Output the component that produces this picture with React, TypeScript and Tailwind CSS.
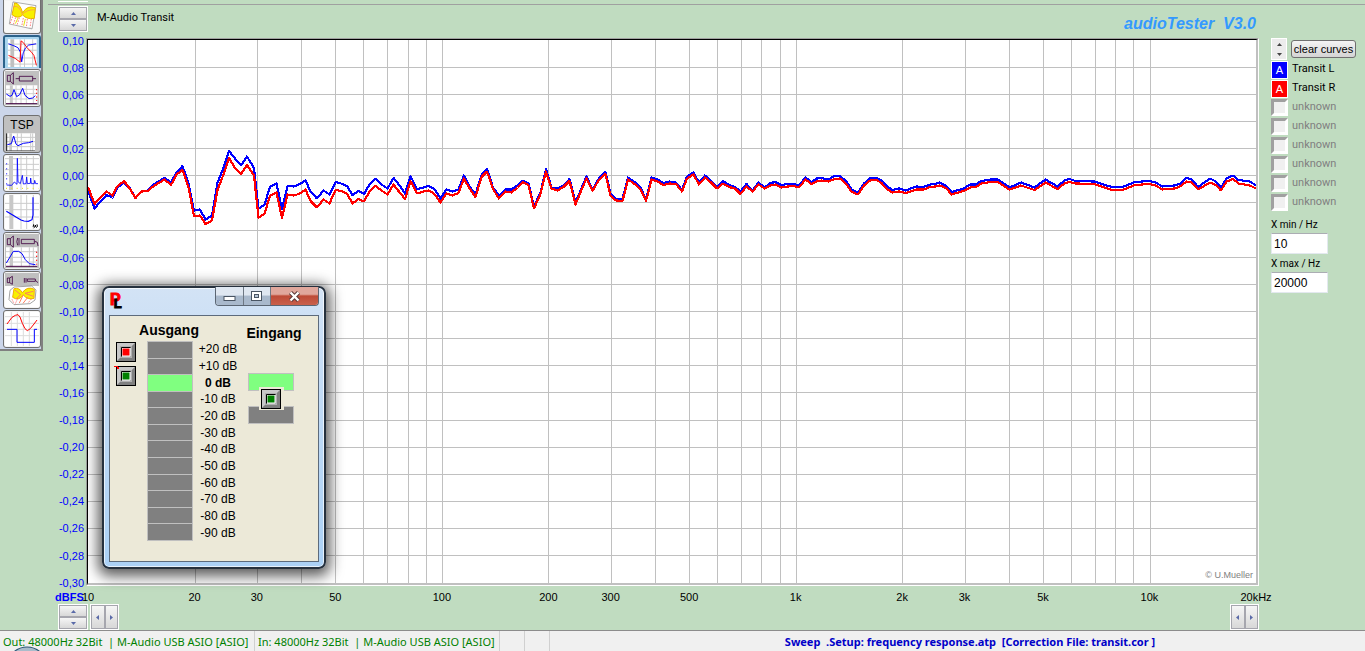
import React from "react";

const PLOT = { x: 88, y: 40, w: 1168, h: 543 };

// Plot points: horizontal position, left channel, right channel
const SAMPLES: number[][] = [
  [88, 190.5, 187], [94.5, 208.5, 204], [100, 202, 198], [106.5, 195, 191.5], [112.5, 197.5, 195.5],
  [117.5, 187.5, 186], [124, 182.5, 181], [130, 188.5, 189], [135.5, 198, 198], [141.5, 191.5, 191.5],
  [147.5, 190.5, 191], [154.5, 184, 185.5], [164.5, 178, 179.5], [171, 182.5, 185], [176.5, 172.5, 174.5],
  [182.5, 166, 170], [188.5, 183.5, 187], [194, 210.5, 216], [200, 209.5, 215.5], [205.5, 219.5, 224],
  [212, 215.5, 220.5], [217.5, 182.5, 190], [223.5, 168, 174.5], [229, 151, 158], [235, 158.5, 168],
  [241, 165.5, 174], [247, 156.5, 165], [254, 168, 175.5], [258.5, 208.5, 217.5], [264.5, 205, 214],
  [270, 186.5, 195.5], [276.5, 183.5, 192.5], [282, 209, 218], [287.5, 186, 194.5], [294, 186.5, 195.5],
  [300, 184, 193.5], [305.5, 180.5, 189.5], [310.5, 191.5, 201], [317, 198.5, 207.5], [323.5, 190.5, 199.5],
  [329.5, 194.5, 203.5], [335.5, 182, 190], [341, 183.5, 191], [347, 186, 193.5], [352.5, 195, 203.5],
  [358.5, 191, 199], [364, 194, 201.5], [369.5, 184.5, 191.5], [375.5, 179, 186], [381.5, 184.5, 190.5],
  [387.5, 188.5, 194.5], [393.5, 178, 184.5], [398.5, 184, 191], [405, 193.5, 199], [410.5, 176, 181],
  [417, 189, 193.5], [423.5, 187.5, 191.5], [428.5, 186, 190.5], [434, 188.5, 193.5], [440.5, 198.5, 202.5],
  [446.5, 189.5, 193.5], [452.5, 191.5, 195.5], [458.5, 189.5, 193], [464, 175.5, 178.5], [469.5, 186.5, 188.5],
  [475.5, 194.5, 197], [481.5, 175, 177], [487, 169, 171.5], [493, 187.5, 189], [499, 195.5, 198.5],
  [505.5, 189.5, 191.5], [511.5, 189.5, 192.5], [517.5, 185.5, 187.5], [523, 180.5, 182], [528.5, 183.5, 185],
  [534, 206.5, 208.5], [540.5, 192.5, 194], [546, 169, 171.5], [551.5, 187.5, 188.5], [557.5, 188.5, 190.5],
  [563.5, 185.5, 187], [569.5, 179, 181], [575.5, 202.5, 204.5], [581, 189.5, 191], [586.5, 176.5, 178.5],
  [592.5, 189.5, 191], [598.5, 179, 180.5], [605.5, 172, 174], [610.5, 193.5, 195.5], [616, 199, 200.5],
  [622.5, 199, 201], [628, 177.5, 179.5], [634, 181.5, 183.5], [640.5, 187.5, 189], [646, 199.5, 201],
  [651.5, 177.5, 179.5], [657.5, 179.5, 181.5], [663.5, 183, 185], [669.5, 181.5, 183.5], [676, 182.5, 184],
  [682, 190, 191.5], [687, 176.5, 178.5], [693.5, 172.5, 174.5], [699, 182.5, 184.5], [705, 175.5, 177.5],
  [711, 181, 182.5], [717, 186.5, 188.5], [723, 181, 183.5], [729, 185, 187], [735, 187, 188.5],
  [740.5, 191.5, 194], [746.5, 184, 186.5], [752.5, 190.5, 191.5], [758.5, 182.5, 184.5], [764.5, 187.5, 188.5],
  [770.5, 183, 185.5], [775.5, 182, 184.5], [781.5, 185, 187.5], [787.5, 184, 186.5], [793.5, 184, 186],
  [799, 185.5, 187.5], [805.5, 177.5, 179.5], [811.5, 182, 184], [816.5, 178.5, 181.5], [821.5, 178, 180.5],
  [828.5, 179.5, 181.5], [834.5, 176, 179], [840, 176, 178.5], [846.5, 181.5, 184.5], [851.5, 189.5, 191.5],
  [858, 192.5, 194.5], [864, 183.5, 185.5], [870, 178, 180.5], [876.5, 178, 180], [881.5, 180.5, 183],
  [887, 186.5, 189], [892.5, 190, 192.5], [899, 188.5, 191.5], [905.5, 190.5, 193], [916.5, 186.5, 189.5],
  [923.5, 187, 189.5], [930, 184.5, 187], [935, 184, 186.5], [939.5, 182.5, 185.5], [946, 185.5, 188],
  [951.5, 192, 194.5], [963.5, 188.5, 191], [970, 184.5, 187.5], [975.5, 184.5, 187], [981.5, 181, 183.5],
  [991, 179.5, 182], [998, 179.5, 182], [1009.5, 187.5, 189.5], [1021, 182.5, 185.5], [1034.5, 187.5, 190],
  [1045.5, 179.5, 182.5], [1057.5, 186.5, 189], [1064.5, 180.5, 183.5], [1069.5, 179, 182], [1075.5, 181, 183.5],
  [1094.5, 181.5, 184], [1104.5, 185, 187.5], [1112.5, 187, 190], [1122.5, 187, 190], [1133.5, 182.5, 185.5],
  [1141.5, 181.5, 184.5], [1149.5, 181, 184], [1156, 182.5, 185.5], [1162, 186.5, 189.5], [1175, 185.5, 188.5],
  [1180.5, 183.5, 186], [1186.5, 178, 181.5], [1192, 179.5, 182.5], [1198, 187, 189.5], [1210, 178.5, 182.5],
  [1216, 181.5, 185], [1221, 187.5, 190.5], [1226.5, 178.5, 181.5], [1233, 175.5, 179], [1238.5, 180, 183.5],
  [1250, 181.5, 185.5], [1256, 185.5, 188.5],
];

const trace = (channel: 1 | 2) => SAMPLES.map((s) => `${s[0]},${s[channel]}`).join(" ");

const freqFraction = (hz: number) => Math.log10(hz / 10) / Math.log10(2000);

const GRID_FREQS = [10, 100, 1000, 10000]
  .flatMap((d) => [1, 2, 3, 4, 5, 6, 7, 8, 9].map((m) => m * d))
  .filter((f) => f > 10 && f < 20000);

const X_LABELS: [number, string][] = [
  [10, "10"], [20, "20"], [30, "30"], [50, "50"], [100, "100"], [200, "200"], [300, "300"], [500, "500"],
  [1000, "1k"], [2000, "2k"], [3000, "3k"], [5000, "5k"], [10000, "10k"], [20000, "20kHz"],
];

const Y_LABELS = Array.from({ length: 21 }, (_, i) => ((10 - i * 2) / 100).toFixed(2).replace(".", ","));

function Plot() {
  return (
    <svg
      viewBox={`${PLOT.x} ${PLOT.y} ${PLOT.w} ${PLOT.h}`}
      preserveAspectRatio="none"
      className="h-full w-full bg-white"
      shapeRendering="crispEdges"
      role="img"
      aria-label="Frequency response"
    >
      <g stroke="#c0c0c0" strokeWidth="1">
        {Array.from({ length: 19 }, (_, i) => {
          const y = Math.floor(PLOT.y + ((i + 1) * PLOT.h) / 20) + 0.5;
          return <line key={i} x1={PLOT.x} x2={PLOT.x + PLOT.w} y1={y} y2={y} />;
        })}
        {GRID_FREQS.map((f) => {
          const x = Math.floor(PLOT.x + 0.6 + freqFraction(f) * PLOT.w) + 0.5;
          return <line key={f} x1={x} x2={x} y1={PLOT.y} y2={PLOT.y + PLOT.h} />;
        })}
      </g>
      <polyline points={trace(1)} fill="none" stroke="#0000ff" strokeWidth="2.2" strokeLinejoin="round" />
      <polyline points={trace(2)} fill="none" stroke="#ff0000" strokeWidth="2.2" strokeLinejoin="round" />
    </svg>
  );
}

function Arrow({ dir, color = "#5a6aa8" }: { dir: "up" | "down" | "left" | "right"; color?: string }) {
  const points = { up: "0,4 7,4 3.5,0", down: "0,0 7,0 3.5,4", left: "4,0 4,7 0,3.5", right: "0,0 0,7 4,3.5" }[dir];
  const vertical = dir === "up" || dir === "down";
  return (
    <svg width={vertical ? 5 : 3} height={vertical ? 3 : 5} viewBox={vertical ? "0 0 7 4" : "0 0 4 7"} preserveAspectRatio="none">
      <polygon points={points} fill={color} />
    </svg>
  );
}

const spinButton =
  "flex flex-1 items-center justify-center border border-[#a6a6ae] bg-linear-to-b from-[#f6f6f6] to-[#d8d8d8]";

function VerticalSpinner({ label }: { label: string }) {
  return (
    <div className="flex h-[26px] w-[30px] flex-col border border-white bg-white">
      <button className={spinButton} aria-label={`${label} up`}><Arrow dir="up" /></button>
      <button className={spinButton} aria-label={`${label} down`}><Arrow dir="down" /></button>
    </div>
  );
}

function HorizontalSpinner({ label }: { label: string }) {
  return (
    <div className="flex h-[26px] w-[29px] border border-white bg-white">
      <button className={spinButton} aria-label={`${label} left`}><Arrow dir="left" /></button>
      <button className={spinButton} aria-label={`${label} right`}><Arrow dir="right" /></button>
    </div>
  );
}

const toolFrame = "h-[38px] rounded-[3px] border border-[#707070] bg-[#f4f4f4]";

function ToolButton({ label, top, rows = 102, frame = toolFrame, children }: {
  label: string; top: number; rows?: number; frame?: string; children: React.ReactNode;
}) {
  return (
    <button aria-label={label} className={`w-[38px] shrink-0 overflow-hidden p-px ${frame}`}>
      <svg viewBox={`15 ${top} 102 ${rows}`} preserveAspectRatio="none" className="h-full w-full" fill="none" strokeWidth="3">
        {children}
      </svg>
    </button>
  );
}

function Speaker({ y }: { y: number }) {
  return <path d={`M22 ${y - 9}H31V${y + 9}H22ZM31 ${y - 9}L40 ${y - 17}V${y + 17}L31 ${y + 9}`} stroke="#400040" strokeWidth="2.5" />;
}

function Toolbar() {
  return (
    <nav aria-label="Measurements" className="flex w-[43px] shrink-0 flex-col items-start gap-px self-start border-r-2 border-b-2 border-[#808080] bg-[#ccd6ea] pb-px pl-[3px]">
      <ToolButton label="Waterfall" top={0} rows={100} frame="h-[34px] rounded-b-[3px] border border-t-0 border-[#707070] bg-[#f4f4f4]">
        <path d="M15 0H117V100H15Z" fill="#f8f8f8" />
        <path d="M39 3L108 15L96 90L28 74Z" fill="#fff" stroke="#808080" strokeWidth="2" />
        <path d="M44 6Q60 8 68 38Q82 12 106 22L103 56Q80 60 68 45Q54 60 36 44Z" fill="#f8f000" stroke="#e8b000" />
        <path d="M41 18Q58 12 67 44Q78 28 104 28" stroke="#ff8060" strokeWidth="2" />
        <path d="M38 50L30 74M47 53L40 76M58 54L51 78M70 55L65 82M82 58L79 85M94 58L90 86" stroke="#ff7878" strokeDasharray="5 4" />
        <path d="M54 55L46 73M76 58L71 80" stroke="#e8e000" />
      </ToolButton>
      <ToolButton label="Frequency response" top={114} rows={90} frame="h-[33px] rounded-t-[3px] border-2 border-b-0 border-[#2c628b] bg-[#a8d4ee]">
        <path d="M21 118H113V204H21Z" fill="#fff" />
        <path d="M21 133H113M21 152H113M21 176H113M21 195H113M60 118V204M74 118V204M100 118V204" stroke="#c8c8c8" />
        <path d="M35 118V204" stroke="#c0c0c0" strokeWidth="12" />
        <path d="M23 132L40 138L53 144L61 158L65 188L70 160L77 145L87 136L111 132" stroke="#0000ff" />
        <path d="M23 168L44 177L60 189L63 123L70 128L82 144L96 158L104 168L112 199" stroke="#ff0000" />
      </ToolButton>
      <ToolButton label="Impedance" top={213}>
        <path d="M15 213H117V315H15Z" fill="#c0c0c0" />
        <path d="M18 256H112V312H18Z" fill="#fff" />
        <path d="M18 268H112M18 281H112M18 297H112M48 256V312M63 256V312M79 256V312M100 256V312" stroke="#d0d0d0" />
        <path d="M34 256V312" stroke="#c8c8c8" strokeWidth="9" />
        <Speaker y={235} />
        <path d="M47 236H58M98 236H108M58 229H98V243H58Z" stroke="#400040" strokeWidth="2.5" />
        <path d="M19 282L30 289L36 286L42 269L50 290L59 284L68 265L75 286L87 296L98 294L106 287" stroke="#0000ff" />
        <path d="M110 267V303" stroke="#ff0000" strokeDasharray="4 7" />
        <path d="M18 311H112" stroke="#400040" />
      </ToolButton>
      <div className="h-1.5" />
      <button aria-label="TSP" className="flex h-[38px] w-[38px] shrink-0 flex-col overflow-hidden rounded-[3px] border border-[#707070] bg-[#c0c0c0] p-px">
        <span className="w-full text-center font-['Liberation_Sans',sans-serif] text-[12px] leading-4 text-black">TSP</span>
        <svg viewBox="15 392 102 54" preserveAspectRatio="none" className="min-h-0 w-full flex-1" fill="none" strokeWidth="3">
          <path d="M19 393H105V447H19Z" fill="#fff" />
          <path d="M19 405H105M19 418H105M19 433H105M52 393V447M64 393V447M92 393V447M98 393V447" stroke="#ccc" />
          <path d="M32 393V447" stroke="#c8c8c8" strokeWidth="8" />
          <path d="M20 393V447" stroke="#111" />
          <path d="M22 427L34 424L41 401L48 425L54 430L70 423L86 421L99 417" stroke="#0000ff" />
          <path d="M19 445H105" stroke="#333" strokeWidth="2" />
        </svg>
      </button>
      <ToolButton label="Spectrum" top={468}>
        <path d="M15 468H117V570H15Z" fill="#fff" />
        <path d="M15 476H117M15 493H117M15 509H117M15 527H117M63 468V570M80 468V570M100 468V570" stroke="#ccc" />
        <path d="M33 468V570" stroke="#c8c8c8" strokeWidth="12" />
        <path d="M20 490V560" stroke="#0000ff" strokeDasharray="3 12" />
        <path d="M20 555L35 556L43 546L51 553L52 475L54 545L61 551L67 526L70 552L78 551L80 531L82 551L91 550L92 534L94 551L103 551L104 541L107 551H114" stroke="#0000ff" strokeWidth="2.5" />
        <path d="M18 565H115" stroke="#e8e000" strokeDasharray="3 13" />
      </ToolButton>
      <ToolButton label="Group delay" top={585}>
        <path d="M15 585H117V687H15Z" fill="#fff" />
        <path d="M15 610H117M15 629H117M15 651H117M63 585V687M80 585V687M100 585V687" stroke="#ccc" />
        <path d="M34 585V687" stroke="#c8c8c8" strokeWidth="12" />
        <path d="M19 634L38 645L49 652L63 660L72 663L85 664L96 659L99 645V592" stroke="#0000ff" strokeWidth="3.5" />
        <path d="M101 673Q98 682 102 682Q106 682 106 675Q106 682 110 682Q114 681 111 673" stroke="#000" strokeWidth="3" />
      </ToolButton>
      <ToolButton label="Loudspeaker" top={702}>
        <path d="M15 702H117V804H15Z" fill="#c0c0c0" />
        <path d="M18 742H112V801H18Z" fill="#fff" />
        <path d="M18 755H112M18 772H112M18 786H112M64 742V800M88 742V800M100 742V800" stroke="#ccc" />
        <path d="M34 742V800" stroke="#c8c8c8" strokeWidth="10" />
        <Speaker y={725} />
        <path d="M53 714Q48 725 53 736M57 714V736M64 718H103V731H64ZM104 724L112 727L114 738" stroke="#400040" strokeWidth="2.5" />
        <path d="M19 789L30 771L40 754H56L66 761L76 779L88 791L106 794" stroke="#0000ff" />
        <path d="M18 799H112" stroke="#400040" />
        <path d="M110 755V794" stroke="#ff0000" strokeDasharray="4 8" />
      </ToolButton>
      <ToolButton label="Loudspeaker waterfall" top={819}>
        <path d="M15 819H117V921H15Z" fill="#fff" />
        <path d="M15 819H117V858H15Z" fill="#c0c0c0" />
        <path d="M22 834H29V848H22ZM29 834L37 829V853L29 848M73 834V848M78 834V848M82 837H106V844H82ZM106 841L114 848" stroke="#400040" strokeWidth="2.5" />
        <path d="M42 861L95 858L108 870L105 900L90 911L42 914L27 899L30 871Z" fill="#fff" stroke="#777" strokeWidth="2" />
        <path d="M42 866Q59 862 67 878Q82 857 103 868L102 895Q83 901 70 885Q56 904 38 892Z" fill="#f8f000" stroke="#f0b000" />
        <path d="M45 870L62 884L48 897M100 874L75 880L100 889M70 884L58 909M84 891L69 910" stroke="#ff8060" />
        <path d="M36 898L42 910M52 898L45 913M94 897L84 909" stroke="#ff7878" strokeDasharray="4 3" />
      </ToolButton>
      <ToolButton label="Oscilloscope" top={936}>
        <path d="M15 936H117V1038H15Z" fill="#fff" />
        <path d="M15 950H117M15 970H117M15 988H117M15 1007H117M34 936V1038M52 936V1038M70 936V1038M88 936V1038" stroke="#ddd" />
        <path d="M21 972L27 964L36 952L46 946L54 944L60 951L67 970L75 986L82 992L91 986L102 972L111 960" stroke="#ff0000" />
        <path d="M21 988H51V1027H103V988H111" stroke="#0000ff" />
      </ToolButton>
    </nav>
  );
}

const unusedSlots = [3, 4, 5, 6, 7, 8];
const rangeInput =
  "h-[21px] w-[57px] border border-[#e3e9ef] border-t-[#abadb3] bg-white px-0.5 font-['Liberation_Sans',sans-serif] text-[12px]";

function CurvePanel() {
  return (
    <aside className="flex w-[106px] shrink-0 flex-col pt-[33px] pl-3 font-['Roboto',sans-serif] text-[11px] text-black">
      <div className="flex h-[22px] items-center gap-1">
        <div className="flex h-[22px] w-4 flex-col border border-white bg-[#ececec]">
          <button aria-label="Scroll up" className="flex flex-1 items-center justify-center"><Arrow dir="up" color="#444" /></button>
          <button aria-label="Scroll down" className="flex flex-1 items-center justify-center"><Arrow dir="down" color="#444" /></button>
        </div>
        <button className="h-[18px] w-[65px] rounded-[3px] border border-[#707070] bg-linear-to-b from-[#f4f4f4] to-[#d4d4d4] font-['Liberation_Sans',sans-serif] text-[11px] leading-4 whitespace-nowrap">
          clear curves
        </button>
      </div>
      <div className="flex flex-col">
        <div className="flex h-[19px] items-center gap-1">
          <button id="curve-l" className="h-[18px] w-[17px] border border-white bg-[#0000ff] font-['Liberation_Sans',sans-serif] text-[11px] leading-4 text-white">A</button>
          <label htmlFor="curve-l">Transit L</label>
        </div>
        <div className="flex h-[19px] items-center gap-1">
          <button id="curve-r" className="h-[18px] w-[17px] border border-white bg-[#ff0000] font-['Liberation_Sans',sans-serif] text-[11px] leading-4 text-white">A</button>
          <label htmlFor="curve-r">Transit R</label>
        </div>
        {unusedSlots.map((n) => (
          <label key={n} className="flex h-[19px] items-center gap-1 text-[#808080]">
            <input type="checkbox" className="h-[17px] w-[17px] appearance-none border-3 border-t-[#a0a0a0] border-r-white border-b-white border-l-[#a0a0a0] bg-[#f0f0f0]" />
            unknown
          </label>
        ))}
      </div>
      <label htmlFor="x-min" className="mt-[5px] text-[10px] leading-4">X min / Hz</label>
      <input id="x-min" defaultValue="10" className={rangeInput} />
      <label htmlFor="x-max" className="mt-0.5 text-[10px] leading-4">X max / Hz</label>
      <input id="x-max" defaultValue="20000" className={rangeInput} />
    </aside>
  );
}

function Led({ label, color, marked = false }: { label: string; color: string; marked?: boolean }) {
  return (
    <button aria-label={label} className="relative flex h-5 w-5 shrink-0 items-center justify-center border border-black bg-[#a8a8a8]">
      <svg viewBox="0 0 18 18" className="h-[18px] w-[18px]">
        <path d="M0 0H18L0 18Z" fill="#c8c8c8" />
        <path d="M18 0V18H0Z" fill="#808080" />
        <path d="M3 3H15V15H3Z" fill="#b0b0b0" />
        <path d="M5 5H13V13H5Z" fill={color} stroke="#fff" />
        <path d="M4.5 13.5V4.5H13.5" fill="none" stroke="#000" />
      </svg>
      {marked && (
        <svg viewBox="0 0 6 4" className="absolute -top-0.5 -left-[3px] h-1 w-1.5">
          <path d="M0 1H4V2H5V4H3V2H0Z" fill="#ff0000" />
        </svg>
      )}
    </button>
  );
}

const LEVELS = ["+20 dB", "+10 dB", "0 dB", "-10 dB", "-20 dB", "-30 dB", "-40 dB", "-50 dB", "-60 dB", "-70 dB", "-80 dB", "-90 dB"];

function LevelDialog() {
  return (
    <section
      role="dialog"
      aria-label="Level meter"
      className="absolute top-[286px] left-[102px] flex h-[283px] w-[224px] flex-col rounded-[7px] border-2 border-[#26313e] bg-linear-to-b from-[#d3e3f5] via-[#c4dcf6] via-30% to-[#abd1f6] px-[5px] pb-[5px] font-['Liberation_Sans',sans-serif] text-black shadow-[0_3px_14px_4px_rgba(0,0,0,0.65)] inset-shadow-[0_0_0_1px_rgba(255,255,255,0.7)]"
    >
      <div className="flex h-[27px] shrink-0 items-start justify-between">
        <div className="flex items-start pt-1 pl-px font-black">
          <span className="text-[16px] leading-4 text-[#ff0000] [-webkit-text-stroke:1px_#ff0000]">P</span>
          <span className="-ml-[7px] pt-1.5 text-[13px] leading-3 text-black [-webkit-text-stroke:1px_#000]">L</span>
        </div>
        <div className="-mt-px flex h-[19px] w-[104px] overflow-hidden rounded-b-[4px] border border-t-0 border-[#5b6673]">
          <button aria-label="Minimize" className="flex flex-1 items-center justify-center border-r border-[#6e7884] bg-linear-to-b from-[#dfe7f1] from-45% to-[#a9b9cc] to-50%">
            <svg width="13" height="13" viewBox="0 0 13 13"><rect x="1" y="6.5" width="11" height="4" fill="#fff" stroke="#4a5563" /></svg>
          </button>
          <button aria-label="Maximize" className="flex flex-1 items-center justify-center border-r border-[#6e7884] bg-linear-to-b from-[#dfe7f1] from-45% to-[#a9b9cc] to-50%">
            <svg width="13" height="13" viewBox="0 0 13 13"><rect x="1.5" y="1.5" width="10" height="9" fill="#fff" stroke="#4a5563" /><rect x="4.5" y="4.5" width="4" height="3" fill="#b8c6d6" stroke="#4a5563" /></svg>
          </button>
          <button aria-label="Close" className="flex w-[47px] items-center justify-center bg-linear-to-b from-[#e0a79c] from-40% via-[#bd4a36] via-50% to-[#c9614c]">
            <svg width="13" height="13" viewBox="0 0 13 13"><path d="M2.5 2.5L10.5 10.5M10.5 2.5L2.5 10.5" stroke="#5a3a3a" strokeWidth="4.4" /><path d="M2.5 2.5L10.5 10.5M10.5 2.5L2.5 10.5" stroke="#fff" strokeWidth="2.4" /></svg>
          </button>
        </div>
      </div>
      <div className="flex min-h-0 flex-1 border border-[#5d6b7c] bg-[#ece9d8]">
        <div className="flex flex-col gap-1 pt-[26px] pl-1.5">
          <Led label="Output clip" color="#ff0000" />
          <Led label="Output enabled" color="#008000" marked />
        </div>
        <div className="flex flex-col pl-[11px]">
          <h2 className="flex h-[25px] w-[44px] items-center justify-center pt-1 text-[14px] font-bold">Ausgang</h2>
          <div className="flex h-[200px] gap-[5px]">
            <div className="flex w-[46px] flex-col border border-[#c0c0c0]">
              {LEVELS.map((l, i) => (
                <div key={l} className={`flex-1 not-last:border-b not-last:border-[#c0c0c0] ${i === 2 ? "bg-[#80ff80]" : "bg-[#808080]"}`} />
              ))}
            </div>
            <ul className="flex w-10 flex-col text-center text-[12px] whitespace-nowrap">
              {LEVELS.map((l, i) => (
                <li key={l} className={`flex flex-1 items-center justify-center leading-none ${i === 2 ? "font-bold" : ""}`}>{l}</li>
              ))}
            </ul>
          </div>
        </div>
        <div className="flex flex-col items-center pl-[10px]">
          <h2 className="flex h-[57px] w-[46px] items-start justify-center pt-[7px] text-[14px] leading-5 font-bold">
            <span className="pl-1.5">Eingang</span>
          </h2>
          <div className="h-[18px] w-[46px] border border-[#c0c0c0] bg-[#80ff80]" />
          <div className="z-10 -my-1 flex h-[23px] w-[25px] items-center justify-center bg-[#ece9d8]">
            <Led label="Input enabled" color="#008000" />
          </div>
          <div className="h-[18px] w-[46px] border border-[#c0c0c0] bg-[#808080]" />
        </div>
      </div>
    </section>
  );
}

export default function App() {
  return (
    <div className="relative flex min-h-screen flex-col overflow-hidden bg-[#c0dcc0] font-['Liberation_Sans',sans-serif] text-[11px]">
      <div className="flex flex-1">
        <Toolbar />
        <main className="flex min-w-0 flex-1 flex-col">
          <div className="ml-[5px] h-[5px] border-b border-[#a0a0a0] pl-2.5">
            <div className="h-0.5 w-[30px] border-b border-white" />
          </div>
          <div className="flex flex-1">
            <div className="flex min-w-0 flex-1 flex-col">
              <header className="flex h-[33px] shrink-0 items-start justify-between pt-px pr-[3px] pl-[15px]">
                <div className="flex items-start gap-[9px]">
                  <VerticalSpinner label="Upper limit" />
                  <h1 className="pt-1 font-['Roboto',sans-serif] text-[11px] leading-4 text-black">M-Audio Transit</h1>
                </div>
                <p className="pt-1.5 text-[16px] leading-6 font-bold whitespace-pre text-[#3399ff] italic">{"audioTester  V3.0"}</p>
              </header>
              <div className="flex min-h-0 flex-1">
                <ol className="flex w-[43px] shrink-0 flex-col justify-between pt-[3px] pr-0.5 pb-[3px] text-right text-[11px] text-[#0000ff]">
                  {Y_LABELS.map((y) => (
                    <li key={y} className="flex h-0 items-center justify-end">{y}</li>
                  ))}
                </ol>
                <div className="min-w-0 flex-1 border-t border-r border-b border-l border-t-[#a0a0a0] border-r-white border-b-white border-l-[#a0a0a0]">
                  <div className="relative h-full border-t border-r-2 border-b-2 border-l border-t-black border-r-[#c0c0c0] border-b-[#c0c0c0] border-l-black">
                    <Plot />
                    <span className="absolute right-[3px] bottom-0.5 font-['Liberation_Sans',sans-serif] text-[9px] leading-3 text-[#808080]">© U.Mueller</span>
                  </div>
                </div>
              </div>
              <div className="flex h-[18px] shrink-0 items-start pt-[3px] leading-4">
                <b className="w-[45px] pl-3 text-[11px] text-[#0000ff]">dBFS</b>
                <div className="relative mr-[3px] h-full flex-1 text-black">
                  {X_LABELS.map(([f, text]) => (
                    <span key={f} className="absolute top-0 -translate-x-1/2" style={{ left: `${freqFraction(f) * 100}%` }}>{text}</span>
                  ))}
                </div>
              </div>
              <div className="flex shrink-0 justify-between pl-[15px]">
                <div className="flex gap-0.5">
                  <VerticalSpinner label="Lower limit" />
                  <HorizontalSpinner label="Minimum frequency" />
                </div>
                <HorizontalSpinner label="Maximum frequency" />
              </div>
            </div>
            <CurvePanel />
          </div>
        </main>
      </div>
      <footer className="relative flex h-[21px] shrink-0 items-center overflow-hidden border-t border-[#8c8c8c] bg-[#f0f0f0] font-['Noto_Sans',sans-serif] text-[11px] whitespace-pre text-[#008000]">
        <span className="flex h-full w-[255px] items-center border-r border-[#d0d0d0] pt-0.5 pl-[3px]">{"Out: 48000Hz 32Bit  | M-Audio USB ASIO [ASIO]"}</span>
        <span className="flex h-full w-[245px] items-center border-r border-[#d0d0d0] pt-0.5 pl-[3px]">{"In: 48000Hz 32Bit  | M-Audio USB ASIO [ASIO]"}</span>
        <span className="h-full w-[25px] border-r border-[#d0d0d0]" />
        <span className="h-full w-[25px] border-r border-[#d0d0d0]" />
        <b className="flex-1 pt-0.5 pl-[25px] text-center text-[#0000c8]">{"Sweep  .Setup: frequency response.atp  [Correction File: transit.cor ]"}</b>
        <svg viewBox="0 0 30 5" className="absolute bottom-0 left-3 h-[5px] w-[30px]">
          <circle cx="15" cy="21" r="20" fill="#a9bccb" stroke="#2b5878" strokeWidth="1.2" />
        </svg>
      </footer>
      <LevelDialog />
    </div>
  );
}
